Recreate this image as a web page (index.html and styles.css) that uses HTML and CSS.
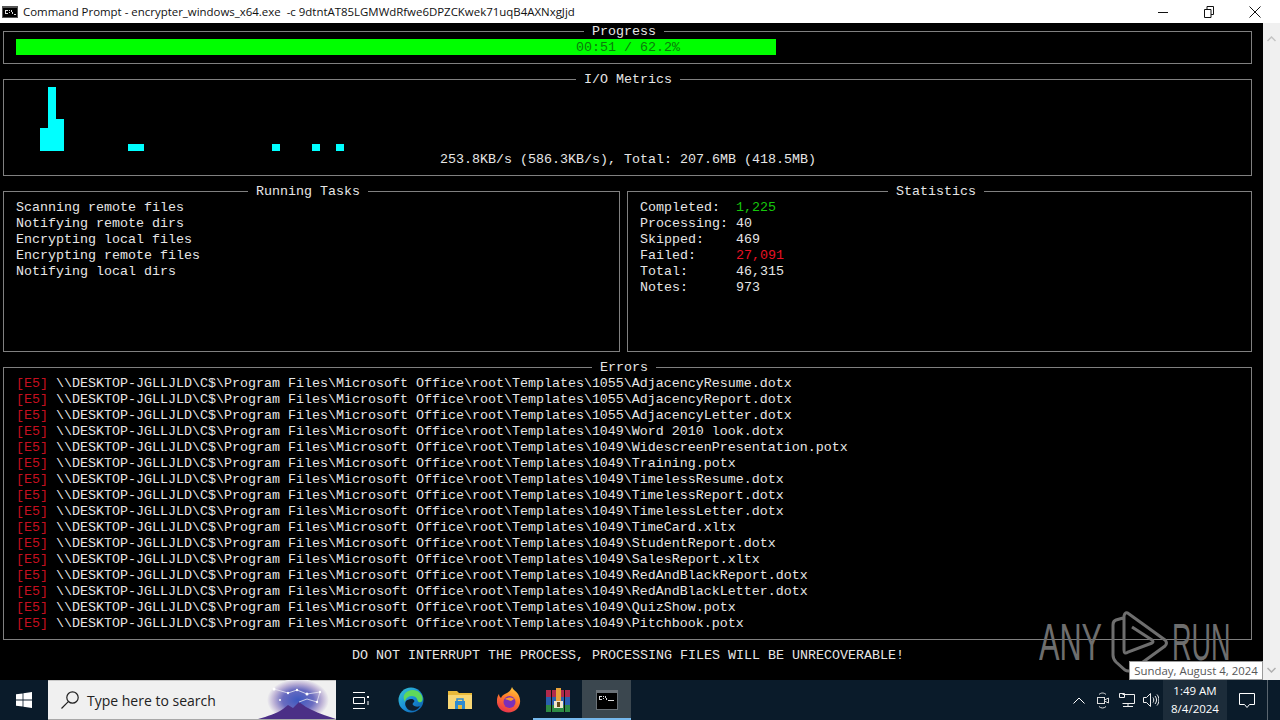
FILE: index.html
```html
<!DOCTYPE html>
<html>
<head>
  <meta charset='utf-8'>
  <title>Command Prompt</title>
  <link rel="stylesheet" href="styles.css">
</head>
<body>
  <div class="window">
    <div class="titlebar">
      <svg class="cmd-icon" width="16" height="12" viewBox="0 0 16 12">
        <rect width="16" height="12" fill="#555"/>
        <rect x="1" y="2" width="14" height="9" fill="#000"/>
        <rect x="3" y="4" width="3" height="1" fill="#ddd"/><rect x="3" y="7" width="3" height="1" fill="#ddd"/>
        <rect x="3" y="5" width="1" height="2" fill="#ddd"/><rect x="7" y="4" width="1" height="1" fill="#ddd"/>
        <rect x="7" y="6" width="1" height="1" fill="#ddd"/><rect x="9" y="4" width="1" height="2" fill="#ddd"/>
        <rect x="10" y="6" width="1" height="2" fill="#ddd"/><rect x="12" y="8" width="2" height="1" fill="#ddd"/>
      </svg>
      <span class="title-text">Command Prompt - encrypter_windows_x64.exe  -c 9dtntAT85LGMWdRfwe6DPZCKwek71uqB4AXNxgJjd</span>
      <div class="controls">
        <div class="control"><svg width="10" height="10" viewBox="0 0 10 10"><path d="M0 5.5h10" stroke="#111" fill="none"/></svg></div>
        <div class="control"><svg width="10" height="12" viewBox="0 0 10 12"><path d="M.5 3.5h6.5v8h-6.5zM3 3.500V.5h6.500v8H7" stroke="#111" fill="none"/></svg></div>
        <div class="control"><svg width="12" height="12" viewBox="0 0 12 12"><path d="M.5.5l11 11M11.500.5l-11 11" stroke="#111" fill="none"/></svg></div>
      </div>
    </div>

    <div class="body">
      <div class="console">
        <section class="panel">
          <h4 class="panel-title title-progress"> Progress </h4>
          <div class="track">
            <div class="bar"></div>
            <span class="bar-label">00:51 / 62.2%</span>
          </div>
        </section>

        <section class="panel">
          <h4 class="panel-title title-metrics"> I/O Metrics </h4>
          <svg class="chart" width="336" height="64" viewBox="0 0 336 64" fill="#00ffff">
            <rect x="24" y="41" width="8" height="23"/>
            <rect x="32" y="0" width="8" height="64"/>
            <rect x="40" y="32" width="8" height="32"/>
            <rect x="112" y="57" width="16" height="7"/>
            <rect x="256" y="57" width="8" height="7"/>
            <rect x="296" y="57" width="8" height="7"/>
            <rect x="320" y="57" width="8" height="7"/>
          </svg>
          <div class="metrics-line">253.8KB/s (586.3KB/s), Total: 207.6MB (418.5MB)</div>
        </section>

        <div class="columns">
          <section class="panel panel-tall">
            <h4 class="panel-title title-tasks"> Running Tasks </h4>
            <div>Scanning remote files</div>
            <div>Notifying remote dirs</div>
            <div>Encrypting local files</div>
            <div>Encrypting remote files</div>
            <div>Notifying local dirs</div>
          </section>
          <section class="panel panel-tall">
            <h4 class="panel-title title-stats"> Statistics </h4>
            <div class="stats">
              <span>Completed:</span><span class="ok">1,225</span>
              <span>Processing:</span><span>40</span>
              <span>Skipped:</span><span>469</span>
              <span>Failed:</span><span class="bad">27,091</span>
              <span>Total:</span><span>46,315</span>
              <span>Notes:</span><span>973</span>
            </div>
          </section>
        </div>

        <section class="panel">
          <h4 class="panel-title title-errors"> Errors </h4>
          <div class="error-row"><span class="tag">[E5]</span> \\DESKTOP-JGLLJLD\C$\Program Files\Microsoft Office\root\Templates\1055\AdjacencyResume.dotx</div>
          <div class="error-row"><span class="tag">[E5]</span> \\DESKTOP-JGLLJLD\C$\Program Files\Microsoft Office\root\Templates\1055\AdjacencyReport.dotx</div>
          <div class="error-row"><span class="tag">[E5]</span> \\DESKTOP-JGLLJLD\C$\Program Files\Microsoft Office\root\Templates\1055\AdjacencyLetter.dotx</div>
          <div class="error-row"><span class="tag">[E5]</span> \\DESKTOP-JGLLJLD\C$\Program Files\Microsoft Office\root\Templates\1049\Word 2010 look.dotx</div>
          <div class="error-row"><span class="tag">[E5]</span> \\DESKTOP-JGLLJLD\C$\Program Files\Microsoft Office\root\Templates\1049\WidescreenPresentation.potx</div>
          <div class="error-row"><span class="tag">[E5]</span> \\DESKTOP-JGLLJLD\C$\Program Files\Microsoft Office\root\Templates\1049\Training.potx</div>
          <div class="error-row"><span class="tag">[E5]</span> \\DESKTOP-JGLLJLD\C$\Program Files\Microsoft Office\root\Templates\1049\TimelessResume.dotx</div>
          <div class="error-row"><span class="tag">[E5]</span> \\DESKTOP-JGLLJLD\C$\Program Files\Microsoft Office\root\Templates\1049\TimelessReport.dotx</div>
          <div class="error-row"><span class="tag">[E5]</span> \\DESKTOP-JGLLJLD\C$\Program Files\Microsoft Office\root\Templates\1049\TimelessLetter.dotx</div>
          <div class="error-row"><span class="tag">[E5]</span> \\DESKTOP-JGLLJLD\C$\Program Files\Microsoft Office\root\Templates\1049\TimeCard.xltx</div>
          <div class="error-row"><span class="tag">[E5]</span> \\DESKTOP-JGLLJLD\C$\Program Files\Microsoft Office\root\Templates\1049\StudentReport.dotx</div>
          <div class="error-row"><span class="tag">[E5]</span> \\DESKTOP-JGLLJLD\C$\Program Files\Microsoft Office\root\Templates\1049\SalesReport.xltx</div>
          <div class="error-row"><span class="tag">[E5]</span> \\DESKTOP-JGLLJLD\C$\Program Files\Microsoft Office\root\Templates\1049\RedAndBlackReport.dotx</div>
          <div class="error-row"><span class="tag">[E5]</span> \\DESKTOP-JGLLJLD\C$\Program Files\Microsoft Office\root\Templates\1049\RedAndBlackLetter.dotx</div>
          <div class="error-row"><span class="tag">[E5]</span> \\DESKTOP-JGLLJLD\C$\Program Files\Microsoft Office\root\Templates\1049\QuizShow.potx</div>
          <div class="error-row"><span class="tag">[E5]</span> \\DESKTOP-JGLLJLD\C$\Program Files\Microsoft Office\root\Templates\1049\Pitchbook.potx</div>
        </section>

        <div class="notice">DO NOT INTERRUPT THE PROCESS, PROCESSING FILES WILL BE UNRECOVERABLE!</div>
      </div>
      <div class="scrollbar">
        <svg width="9" height="6" viewBox="0 0 9 6"><path d="M.5 5l4-4 4 4" stroke="#c4c4c4" stroke-width="1.500" fill="none"/></svg>
        <svg width="9" height="6" viewBox="0 0 9 6"><path d="M.5 1l4 4 4-4" stroke="#b0b0b0" stroke-width="1.500" fill="none"/></svg>
      </div>
    </div>

    <div class="taskbar">
      <div class="start">
        <svg width="16" height="16" viewBox="0 0 16 16" fill="#fff"><path d="M0 2.300l6.600-.9v6.200H0zM7.400 1.300L16 0v7.600H7.400zM0 8.400h6.600v6.200L0 13.700zM7.400 8.400H16V16l-8.600-1.300z"/></svg>
      </div>
      <div class="search">
        <svg width="20" height="20" viewBox="0 0 20 20" fill="none" stroke="#222" stroke-width="1.200"><circle cx="12.500" cy="7.500" r="5.700"/><path d="M8.300 11.700L1.500 18.500"/></svg>
        <span class="search-text">Type here to search</span>
        <svg class="search-art" width="78" height="39" viewBox="0 0 78 39">
          <defs>
            <radialGradient id="glow" cx="0.5" cy="0.5" r="0.5">
              <stop offset="0" stop-color="#3c58c0"/>
              <stop offset="0.5" stop-color="#6a6cc0"/>
              <stop offset="0.78" stop-color="#bdb2d6"/>
              <stop offset="1" stop-color="#f0f0f0"/>
            </radialGradient>
          </defs>
          <ellipse cx="40" cy="20" rx="31" ry="21" fill="url(#glow)"/>
          <path d="M0 39c10-3 18-5 25-10l5-4 5 3 6-6 7 5 6 3c8 4 16 6 24 9z" fill="#4b2f86"/>
          <path d="M16 9l14 4 9-3 10 4 13-2-3 10-10-3-8 3" stroke="#e8e8f4" stroke-width="0.800" fill="none"/>
          <g fill="#fff"><circle cx="16" cy="9" r="1.500"/><circle cx="30" cy="13" r="1.200"/><circle cx="39" cy="10" r="1.200"/><circle cx="49" cy="14" r="1.500"/><circle cx="62" cy="12" r="1.200"/><circle cx="59" cy="22" r="1.200"/><circle cx="22" cy="20" r="1"/></g>
        </svg>
      </div>
      <div class="task task-view">
        <svg width="16" height="17" viewBox="0 0 16 17" fill="none" stroke="#fff"><path d="M0 .5h12M0 16.500h12M.5 5.500h11v6H.5z"/><rect x="14" y="4" width="2" height="2" fill="#fff" stroke="none"/><path d="M15 9v4" /></svg>
      </div>
      <div class="task">
        <svg width="26" height="26" viewBox="0 0 26 26">
          <defs><linearGradient id="edge" x1="0" y1="0" x2="1" y2="1"><stop offset="0" stop-color="#37c6d0"/><stop offset="0.5" stop-color="#1a8fd8"/><stop offset="1" stop-color="#0c59a4"/></linearGradient></defs>
          <circle cx="13" cy="13" r="12.500" fill="url(#edge)"/>
          <path d="M6 8c3-5 11-7 16-2 3 3 3.500 8 1 9-3 1-3-1-4-3-1-3-6-4-9-2-2 1-3 3-3 5-1-2-2-5-1-7z" fill="#5fd85a"/>
          <path d="M13 12c3 0 4 2 3 3s-2 2-1 3c2 2 5 2 7 1-2 4-7 6-11 4-3-2-5-6-3-9 1-1 3-2 5-2z" fill="#0f1d2c"/>
        </svg>
      </div>
      <div class="task">
        <svg width="24" height="20" viewBox="0 0 24 20">
          <path d="M0 1h9l2 2h13v16H0z" fill="#e8b93a"/>
          <path d="M0 5h24v14H0z" fill="#f8d775"/>
          <path d="M7 11h10v8H7z" fill="#2e8bd0"/>
          <path d="M9 11v-2h6v2" stroke="#2e8bd0" stroke-width="1.500" fill="none"/>
          <path d="M10 15h4v4h-4z" fill="#e8b93a"/>
        </svg>
      </div>
      <div class="task">
        <svg width="24" height="26" viewBox="0 0 24 26">
          <defs><linearGradient id="fox" x1="0.7" y1="0" x2="0.3" y2="1"><stop offset="0" stop-color="#ffc93a"/><stop offset="0.45" stop-color="#ff7a2a"/><stop offset="1" stop-color="#e8304d"/></linearGradient></defs>
          <path d="M15 0c1 3 4 4 6 7 3 5 3 11-1 15-5 5-13 4-17 0C-1 18-1 11 2 7c0 2 1 3 2 4 1-3 4-4 6-5 2-1 4-3 5-6z" fill="url(#fox)"/>
          <circle cx="12.500" cy="15" r="6" fill="#7b2fb8"/>
          <path d="M8 12c3-2 7-2 9 0l-3 2c-2-1-4-1-6-2z" fill="#ff9a2a"/>
        </svg>
      </div>
      <div class="task task-open">
        <svg width="24" height="26" viewBox="0 0 24 26">
          <rect y="3" width="24" height="7" fill="#b02a4c"/>
          <rect y="10" width="24" height="8" fill="#2a5fae"/>
          <rect y="18" width="24" height="7" fill="#2e8b45"/>
          <g fill="#111"><rect x="5" y="3" width="1" height="22"/><rect x="18" y="3" width="1" height="22"/></g>
          <rect x="10" y="1" width="5" height="13" fill="#e8a23a"/>
          <rect x="8" y="14" width="9" height="7" fill="#efe6d0"/>
          <rect x="11" y="15" width="3" height="5" fill="#6a4a1a"/>
        </svg>
      </div>
      <div class="task task-active">
        <svg width="22" height="20" viewBox="0 0 22 20">
          <rect width="22" height="20" fill="#6b7278"/>
          <rect x="1" y="3" width="20" height="16" fill="#000"/>
          <path d="M3 6h3v1H3zM3 7h1v2H3zM3 9h3v1H3zM7 6h1v1H7zM7 8h1v1H7zM9 6h1v2H9zM10 8h1v2h-1zM12 10h6v1h-6z" fill="#ddd"/>
        </svg>
      </div>
      <div class="tray">
        <div class="tray-item"><svg width="12" height="7" viewBox="0 0 12 7"><path d="M.5 6.500L6 1l5.500 5.500" stroke="#fff" fill="none"/></svg></div>
        <div class="tray-item"><svg width="14" height="17" viewBox="0 0 14 17" fill="none" stroke="#ddd"><path d="M3 2.500c2-2 5-2 7 0M3 14.500c2 2 5 2 7 0"/><rect x="1.500" y="5.500" width="7" height="6"/><path d="M8.500 8l4-2v5l-4-2"/></svg></div>
        <div class="tray-item"><svg width="16" height="16" viewBox="0 0 16 16" fill="none" stroke="#eee"><path d="M3.500 2.500h12v9h-12M.5 1.500h5v4h-5zM9 11.500v3M4 14.500h10"/></svg></div>
        <div class="tray-item"><svg width="16" height="14" viewBox="0 0 16 14" fill="none" stroke="#eee"><path d="M.5 4.500h3l4-4v13l-4-4h-3zM10 4.500c1 1.500 1 3.500 0 5M12 3c2 2.500 2 5.500 0 8M14 1.500c2.500 3 2.500 8 0 11"/></svg></div>
        <div class="clock"><div>1:49 AM</div><div>8/4/2024</div></div>
        <div class="notify"><svg width="16" height="15" viewBox="0 0 16 15" fill="none" stroke="#fff"><path d="M.5.500h15v11h-5l-2.500 3-2.500-3h-5z"/></svg></div>
        <div class="show-desktop"></div>
      </div>
    </div>

    <div class="watermark">
      <span class="wm-word wm-any">ANY</span>
      <svg class="wm-logo" width="62" height="66" viewBox="0 0 62 66" fill="none" stroke="#6e6e6e" stroke-width="3">
        <path d="M15 10L8 12Q5 13 5 17V47Q5 51 8 54L17 62Q20 64 24 62L57 38Q60 35 57 32L21 6Q17 3 16 8V42"/>
        <path d="M16 42Q16 47 20 44L44 35Q46 34 44 32L24 19"/>
      </svg>
      <span class="wm-word wm-run">RUN</span>
    </div>
    <div class="date-tip">Sunday, August 4, 2024</div>
  </div>
</body>
</html>
```

FILE: styles.css
```css
body {
  margin: 0;
  background: #000;
}
.window {
  position: relative;
  display: flex;
  flex-direction: column;
  width: 1280px;
  height: 720px;
  overflow: hidden;
}

/* title bar */
.titlebar {
  display: flex;
  align-items: center;
  flex: 0 0 23px;
  background: #fff;
  color: #111;
  font-family: "Open Sans", sans-serif;
  font-size: 11.45px;
}
.cmd-icon {
  margin: 0 5px 0 2px;
}
.title-text {
  white-space: pre;
}
.controls {
  display: flex;
  margin-left: auto;
  margin-right: 2px;
}
.control {
  display: flex;
  align-items: center;
  justify-content: center;
  width: 46px;
  height: 23px;
}

/* console area */
.body {
  display: flex;
  flex: 0 0 657px;
}
.console {
  flex: 1;
  padding: 8px 11px 0 3px;
  background: #000;
  color: #e6e6e6;
  font-family: "Liberation Mono", monospace;
  font-size: 13.33px;
  line-height: 16px;
}
.scrollbar {
  display: flex;
  flex-direction: column;
  justify-content: space-between;
  align-items: center;
  flex: 0 0 17px;
  padding: 13px 0 7px;
  box-sizing: border-box;
  background: #f0f0f0;
}
.panel {
  position: relative;
  padding: 8px 11px 7px 12px;
  margin-bottom: 15px;
  border: 1px solid #808080;
}
.panel-title {
  position: absolute;
  top: -8px;
  margin: 0;
  background: #000;
  font-size: inherit;
  font-weight: normal;
  line-height: 16px;
  white-space: pre;
}
.title-progress { left: 580px; }
.title-metrics { left: 572px; }
.title-tasks { left: 244px; }
.title-stats { left: 260px; }
.title-errors { left: 588px; }

.track {
  position: relative;
  height: 16px;
  text-align: center;
}
.bar {
  position: absolute;
  top: -1px;
  left: 0;
  width: 760px;
  height: 16px;
  background: #00ff00;
}
.bar-label {
  position: relative;
  color: #0b7a0b;
}
.chart {
  display: block;
  margin: -1px 0 1px;
}
.metrics-line {
  text-align: center;
}
.columns {
  display: grid;
  grid-template-columns: 617px 1fr;
  column-gap: 7px;
}
.panel-tall {
  box-sizing: border-box;
  height: 161px;
}
.stats {
  display: grid;
  grid-template-columns: 96px 1fr;
}
.ok {
  color: #16c60c;
}
.bad {
  color: #e81123;
}
.error-row {
  white-space: pre;
}
.tag {
  color: #c50f1f;
}
.notice {
  margin-top: -7px;
  padding-left: 1px;
  text-align: center;
}

/* taskbar */
.taskbar {
  display: flex;
  flex: 0 0 40px;
  background: #0a1b2a;
}
.start {
  display: flex;
  align-items: center;
  justify-content: center;
  width: 48px;
}
.search {
  position: relative;
  display: flex;
  align-items: center;
  box-sizing: border-box;
  width: 288px;
  padding-left: 12px;
  background: #f0f0f0;
  border-top: 1px solid #c8c8c8;
  border-bottom: 1px solid #a8a8a8;
  color: #222;
  font-family: "Open Sans", sans-serif;
  font-size: 14px;
}
.search-text {
  margin-left: 7px;
}
.search-art {
  position: absolute;
  right: 0;
  bottom: 0;
}
.task {
  display: flex;
  align-items: center;
  justify-content: center;
  width: 49px;
}
.task-view {
  width: 50px;
}
.task-open {
  box-shadow: inset 0 -2px 0 #76b9ed;
}
.task-active {
  background: #3b474f;
  box-shadow: inset 0 -2px 0 #76b9ed;
}
.tray {
  display: flex;
  margin-left: auto;
  color: #fff;
  font-family: "Open Sans", sans-serif;
  font-size: 11.5px;
}
.tray-item {
  display: flex;
  align-items: center;
  justify-content: center;
  width: 24px;
}
.clock {
  width: 64px;
  padding-top: 2px;
  box-sizing: border-box;
  background: #1c2c3a;
  line-height: 18px;
  text-align: center;
}
.notify {
  display: flex;
  align-items: center;
  justify-content: center;
  width: 40px;
}
.show-desktop {
  width: 12px;
  border-left: 1px solid #5a6670;
}

/* things lying over the console */
.watermark {
  position: absolute;
  left: 1037px;
  top: 608px;
  width: 200px;
  height: 66px;
}
.wm-word {
  position: absolute;
  top: 15px;
  color: #6e6e6e;
  font-family: "Liberation Sans", sans-serif;
  font-size: 52px;
  line-height: 38px;
  transform-origin: left center;
  transform: scaleX(0.59);
}
.wm-any {
  left: 2px;
}
.wm-run {
  left: 135px;
  transform: scaleX(0.52);
}
.wm-logo {
  position: absolute;
  left: 71px;
  top: 0;
}
.date-tip {
  position: absolute;
  left: 1129px;
  top: 661px;
  box-sizing: border-box;
  width: 134px;
  height: 19px;
  border: 1px solid #9a9a9a;
  background: #fff;
  color: #575757;
  font-family: "Open Sans", sans-serif;
  font-size: 11.4px;
  line-height: 17px;
  text-align: center;
}
```
